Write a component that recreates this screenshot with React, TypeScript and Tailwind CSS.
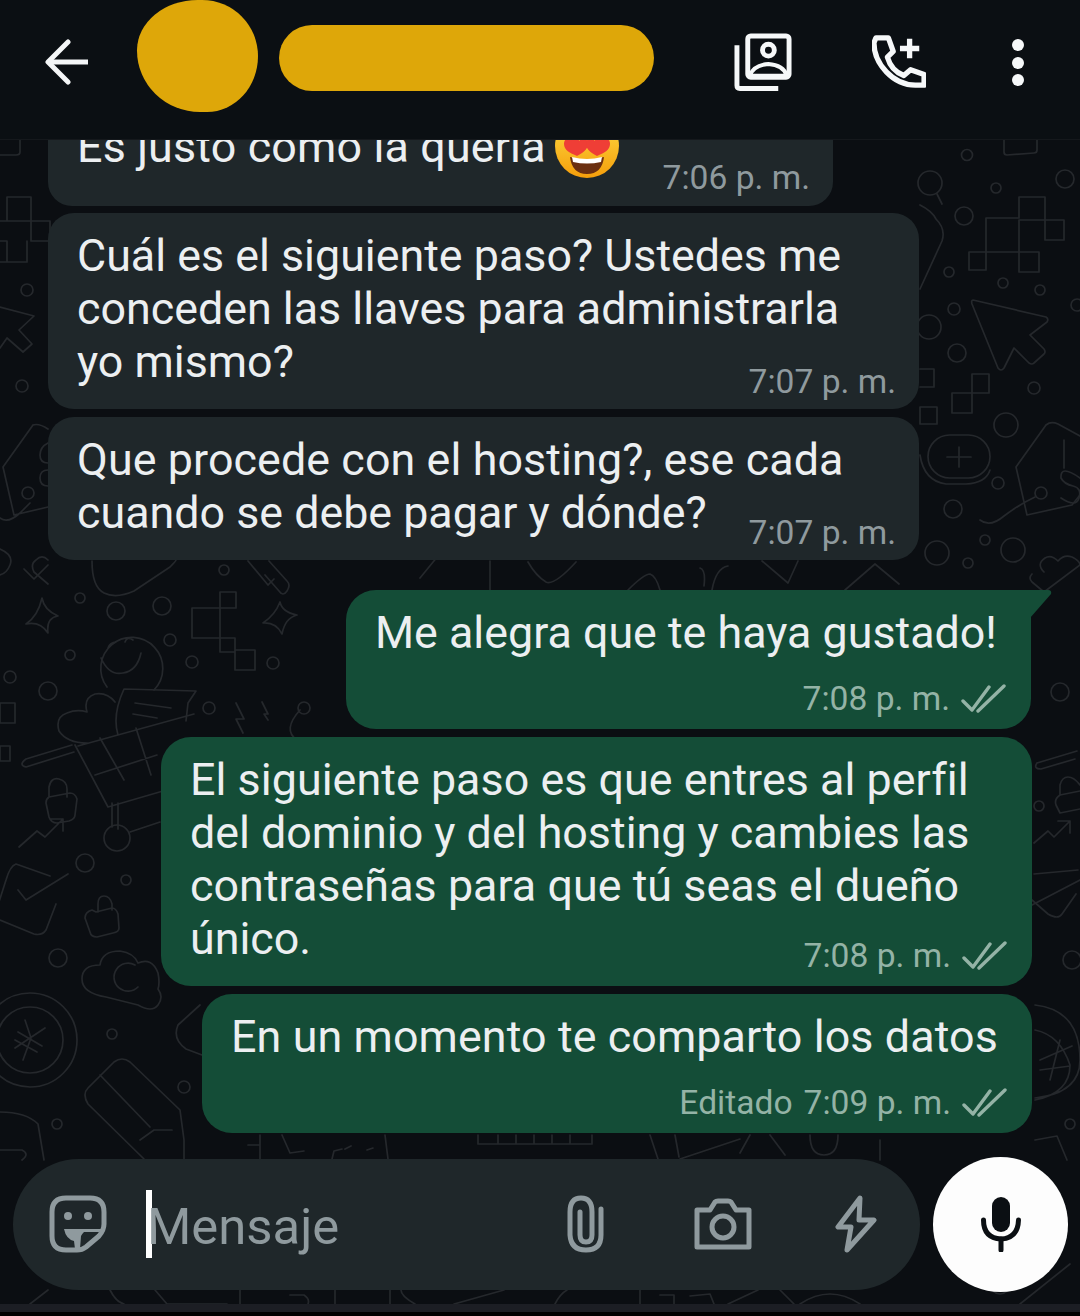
import React from "react";

const F = { fontFamily: "Roboto, 'Noto Sans', sans-serif" };

function Doodles() {
  return (
    <svg className="absolute inset-0 w-full h-full" viewBox="0 140 1080 1164" fill="none" stroke="#25282c" strokeWidth="1.7" strokeLinecap="round" strokeLinejoin="round">
      {[
        [967,155,5.5],[930,183,12],[996,188,5],[1065,179,9],[964,216,9],[949,272,5],[1003,283,5],[1040,290,5],[954,309,6],[929,327,12],[957,353,9],[1034,388,6],[1077,305,6],[1006,425,12],[998,483,6],[953,509,9],[985,540,5],[968,563,5],[1013,550,12],[937,553,12],
        [27,290,6],[22,386,6],[80,598,5],[116,611,9],[162,606,9],[170,640,6],[70,655,5],[10,677,6],[48,691,9],[192,662,6],[273,663,6],[209,708,6],[304,708,6],[224,570,5],
        [85,863,9],[126,880,5],[58,958,9],[112,1034,5],[184,1087,6],[57,1124,5],[1060,692,9],[1039,806,5],[1072,960,9],[1070,1124,5],[1000,1285,9],
      ].map((c, i) => <circle key={i} cx={c[0]} cy={c[1]} r={c[2]} />)}
      {/* top right puzzle */}
      <path d="M1004 140v12q0 3 3 3l27-2q3 0 3-3v-10M986 252v-34h33v-21h26v23h19v20h-19v-20h-26v32h20v20h-20v-20h-33M969 252h17v18h-17z" />
      <path d="M937 194l5 10M920 205q12 6 16 14 10 10 6 22l-22 48" />
      <path d="M973 300l73 17q3 2 1 5l-17 13 14 14q2 3 0 5l-10 9q-2 2-5 0l-15-15-10 20q-3 4-6 0l-26-64q-1-4 1-4z" />
      <path d="M920 369h14v18h-14M920 407h17v17h-17zM952 393h20v20h-20zM972 374h17v19h-17z" />
      <rect x="928" y="435" width="62" height="43" rx="21.5" />
      <path d="M920 455q4 26 26 29h20q20-1 24-14M947 457h24M959 447v20" />
      <path d="M1046 425l-30 42 11 48 45-10 8-10M1046 425q5-4 12-1l22 12M980 520q10 8 24-4 16-12 31-19" />
      <circle cx="1041" cy="493" r="6" />
      <path d="M1080 478q-20-14-19 0 3 6 12 8t6 12-18 0M1064 440v28" />
      <path d="M1044 572q-8-8 1-14 6-4 13 3 6-7 14-4 8 4 8 8l-36 27-12-10q-4-4 0-8" />
      {/* top left puzzle and tag */}
      <path d="M0 155h16q4 0 4-3v-12M7 197h24v24h-24zM31 221h19v20h-19zM0 221h7M0 241h7v21h20v-21M0 262h7" />
      <path d="M0 307l34 9-15 14 13 14-9 8-16-14-7 10" />
      <path d="M33 425l-30 42 11 48 34-8M33 425q6-2 15 4M0 518q8 6 20-5 6-6 10-10" />
      <circle cx="28" cy="493" r="6" />
      <path d="M48 443q-8 4-8 12t8 8M48 470q-8 0-8 8t8 8" />
      <path d="M0 549q14 6 10 16-3 8-10 10M48 560q-6-6-12 0-6 4-2 12l14 12" />
      {/* strip 560-590 */}
      <path d="M48 565l-14 14-10-10M92 561q0 26 12 32 12 6 30-2l36-24q6-6 6-7M248 561l20 24 6-6M265 575l14 16q4 6 8 0 4-6 0-10l-18-20" />
      <path d="M420 578l18-22M490 561v29M528 562q8 14 18 20 8 4 30-20M660 590q-4-14-10-16-6 0-22 16M700 568q6 2 4 18M712 590q4-22 16-24" />
      <path d="M762 561l26 22 10-22M845 590l30-26 24 20" />
      {/* star */}
      <path d="M42 598q2 12 16 18-12 2-10 17-8-12-22-9 12-8 16-26zM280 602q2 10 17 13-12 3-15 19-6-12-19-11 12-8 17-21z" />
      <path d="M220 592h16v16h-16zM192 608h28v30h-28zM220 638h15v14h-15zM235 650h20v20h-20z" />
      {/* smiley and cart */}
      <path d="M107 687a31 31 0 1 1 47 3M101 658q8 18 22 15 14-2 18-20M108 648q2-6 8-6M125 642q2-6 8-2" />
      <path d="M87 743q-20 0-28-12-4-14 8-18 10-4 20-1-4-14 8-18 12-2 20 8M118 735q-6-20 6-46l72 2-8 12-2 18M135 703l36 5M133 714l24 4M78 746l116-32M72 745l-46 14q-8 6 0 8l48-15" />
      <path d="M75 745l33 62 55-16M100 738l24 42M136 728l15 47M95 775l62-20M112 803v24M118 803v26M130 832l30-10" />
      <circle cx="117" cy="838" r="13" />
      <path d="M236 703l8 16-8 0 7 14M262 702l6 12-4 0 4 6" />
      <path d="M300 710q-18 20-3 30l40 16" />
      <path d="M49 797v-10q2-10 10-8t8 10v8M49 797l21-4q5 0 7 6l-2 16q0 4-6 6l-12 2q-6 0-8-6l-3-14q0-4 3-6zM19 847l18-16 8 6 18-18M50 819h13v12" />
      <path d="M0 703h15v20H0zM0 746h10v15H0z" />
      {/* envelope left */}
      <path d="M50 876l-34-12q-6 2-10 16L-2 905M18 890l8 10 42-26M0 920l34 14q8 2 12-4l10-26" />
      <path d="M98 912v-8q0-8 6-8t8 8v6M96 912l16-4q4 0 6 6l1 14q0 4-6 5l-16 4q-6 0-7-5l-5-14q0-6 7-8z" />
      <path d="M106 997q-24-4-24-18 0-14 18-14 2-14 20-14 14 2 18 12 14-6 20 10 2 10 0 16 6 8 0 16t-20 0zM135 965a14 14 0 1 0 3 22" />
      <circle cx="30" cy="1040" r="47" />
      <circle cx="30" cy="1040" r="33" />
      <path d="M25 1020l6 18-8 22M45 1028l-30 20M15 1040l22 12M18 1032l24 14" />
      <path d="M130 1062q-8-6-16 0l-26 26q-6 6 0 16l56 55M130 1062l50 48 4 30v20M100 1075l50 52M140 1140l14-10 18 0" />
      <path d="M0 1112q26 0 38 12l6 36M0 1150h22q8 4 0 10" />
      <path d="M196 890q-14-2-15 18-2 20 10 32M200 1005l-22 20q-6 14 8 24l16 6" />
      {/* bottom band */}
      <path d="M260 1135v24M248 1145h12M282 1135l8 18 14-2M332 1159l2-8 8-2M345 1149l6-3M367 1150l6-2M385 1135l3 24M478 1135v9h114v-9M498 1135v9M516 1135v9M534 1135v9M552 1135v9M570 1135v9" />
      <path d="M650 1135l8 24M675 1135l4 22M680 1159l60-20M750 1135l-10 18M770 1135l15 20M810 1135q0 20 14 20t14-20M880 1140v20" />
      {/* bottom strip under input */}
      <path d="M30 1304l18-14M110 1290q6 12 14 14M155 1290l12 14h60M240 1290v14M290 1295h14q6 4 4 9M335 1290v14M390 1290v14M415 1304q-14-8-14-14M454 1304l50-14M555 1304q5-10 12-14M640 1290v14M660 1295h14v9M690 1296l20-2 4 10M728 1304l30-14M780 1290l14 14M800 1304q30-20 60 0M1020 1304l50-40" />
      {/* right side */}
      <path d="M1037 763l40-12M1041 769l34-10M1037 763q-4 6 4 6M1060 795v-10q2-8 8-8t12 8M1060 795l20-4M1060 795q-6 4-4 10l4 8 20-4M1034 843l14-12 6 6 16-16M1058 821h12v12M1034 874l44-4M1032 905l48-25M1032 900l16 14q10 6 14 0l14-20M1035 1005q45 5 45 55M1035 1098q45-5 45-38M1035 1030q25 5 35 35 0 28-35 35M1060 1040l-10 40M1040 1060l32-14M1040 1070l30-4M1035 1140l22-4 10 24" />
    </svg>
  );
}

function Check({ className }: { className: string }) {
  return (
    <svg className={className} viewBox="0 0 46 30" fill="none" stroke="#94b3a6" strokeWidth="3.4" strokeLinecap="round" strokeLinejoin="round">
      <path d="M2 17l9 9L28 3M17 27L43 2" />
    </svg>
  );
}

function Emoji() {
  return (
    <svg className="inline-block w-[66px] h-[66px] align-[-17px] ml-[8px]" viewBox="0 0 66 66">
      <defs>
        <linearGradient id="eg" x1="0" y1="0" x2="0" y2="1">
          <stop offset="0" stopColor="#fde047" />
          <stop offset="1" stopColor="#f59e0b" />
        </linearGradient>
      </defs>
      <circle cx="33" cy="33" r="32" fill="url(#eg)" />
      <path d="M16 44q17 5 34 0-2 17-17 17T16 44z" fill="#6b2f10" />
      <path d="M18 44q15 4 30 0l-1 5q-14 3-28 0z" fill="#fff" />
      <path d="M17 26c4-4 8-2 8 2 3-4 9-3 9 3 0 5-5 9-11 12-7-3-13-6-13-12 0-5 4-7 7-5z" fill="#ef3e36" />
      <path d="M49 26c-4-4-8-2-8 2-3-4-9-3-9 3 0 5 5 9 11 12 7-3 13-6 13-12 0-5-4-7-7-5z" fill="#ef3e36" />
    </svg>
  );
}

function Meta({ time, out, edited, className }: { time: string; out?: boolean; edited?: boolean; className: string }) {
  return (
    <div className={`absolute flex items-center text-[33.6px] leading-[40px] whitespace-nowrap ${out ? "text-[#94b3a6]" : "text-[#8f9a9e]"} ${className}`}>
      {edited && <span className="mr-[11px]">Editado</span>}
      <span>{time}</span>
      {out && <Check className="w-[46px] h-[30px] ml-[11px]" />}
    </div>
  );
}

function Lines({ lines }: { lines: { t: string; c?: string }[] }) {
  return (
    <div className="text-[44.8px] leading-[53px] text-[#eceff1] whitespace-nowrap">
      {lines.map((l) => <div key={l.t} className={l.c}>{l.t}</div>)}
    </div>
  );
}

export default function App() {
  return (
    <div className="w-[1080px] h-[1316px] flex flex-col overflow-hidden bg-black" style={F}>
      <header className="h-[140px] shrink-0 bg-[#0b0f13] border-b border-[#15181c] flex items-start z-10">
        <svg className="ml-[44px] mt-[39px] w-[46px] h-[46px] shrink-0" viewBox="0 0 46 46" fill="none" stroke="#f4f6f7" strokeWidth="5">
          <path d="M24 3L4 23l20 20" strokeLinecap="round" strokeLinejoin="round" />
          <path d="M4 23h40" />
        </svg>
        <div className="ml-[47px] w-[121px] h-[112px] shrink-0 bg-[#dea709] rounded-[50%_46%_42%_52%/45%_50%_50%_55%]" />
        <div className="ml-[21px] mt-[25px] w-[375px] h-[66px] shrink-0 rounded-full bg-[#dea709]" />
        <svg className="ml-[80px] mt-[32px] w-[59px] h-[60px] shrink-0" viewBox="0 0 60 60" fill="none" stroke="#f6f8f9" strokeWidth="5" strokeLinejoin="round" strokeLinecap="round">
          <rect x="14" y="3.500" width="42" height="42" rx="3" />
          <circle cx="35" cy="18" r="6" />
          <path d="M16 44q4-11 19-12 15 1 19 12z" strokeWidth="4" />
          <path d="M3 13v41q0 3 3 3h39" strokeLinecap="butt" />
        </svg>
        <svg className="ml-[79px] mt-[35px] w-[54px] h-[54px] shrink-0" viewBox="0 0 56 56" fill="none" stroke="#f6f8f9" strokeWidth="5.500" strokeLinejoin="round" strokeLinecap="round">
          <path d="M4 3h13l5 14-6 6q4 14 17 19l7-6 14 5v11H45C22 52 2 30 2 8z" />
          <path d="M39 4v20M29 14h20" strokeLinecap="butt" strokeWidth="5.500" />
        </svg>
        <div className="ml-[86px] mt-[39px] flex flex-col gap-[5.5px] shrink-0">
          <div className="w-[12px] h-[12px] rounded-full bg-[#f6f8f9]" />
          <div className="w-[12px] h-[12px] rounded-full bg-[#f6f8f9]" />
          <div className="w-[12px] h-[12px] rounded-full bg-[#f6f8f9]" />
        </div>
      </header>

      <main className="relative flex-1 min-h-0 flex flex-col bg-[#0b0e12] overflow-hidden">
        <Doodles />
        <div className="relative flex-1 min-h-0 flex flex-col">
          {/* incoming */}
          <div className="relative ml-[48px] mt-[-43px] w-[785px] h-[109px] rounded-[24px] bg-[#1f272a] pl-[29px] pt-[16px]">
            <div className="text-[44.8px] leading-[53px] text-[#eceff1] whitespace-nowrap h-[53px] tracking-[0.17px]">Es justo como la quería<Emoji /></div>
            <Meta time="7:06 p. m." className="right-[23px] bottom-[8px]" />
          </div>
          <div className="relative ml-[48px] mt-[7px] w-[871px] h-[196px] rounded-[26px] bg-[#1f272a] pl-[29px] pt-[16px]">
            <Lines lines={[{ t: "Cuál es el siguiente paso? Ustedes me" }, { t: "conceden las llaves para administrarla" }, { t: "yo mismo?" }]} />
            <Meta time="7:07 p. m." className="right-[23px] bottom-[7px]" />
          </div>
          <div className="relative ml-[48px] mt-[8px] w-[871px] h-[143px] rounded-[26px] bg-[#1f272a] pl-[29px] pt-[16px]">
            <Lines lines={[{ t: "Que procede con el hosting?, ese cada", c: "tracking-[0.1px]" }, { t: "cuando se debe pagar y dónde?" }]} />
            <Meta time="7:07 p. m." className="right-[23px] bottom-[7px]" />
          </div>
          {/* outgoing */}
          <div className="relative ml-[346px] mt-[30px] w-[685px] h-[139px] rounded-[30px] rounded-tr-none bg-[#144d37] pl-[29px] pt-[16px]">
            <svg className="absolute top-0 right-[-21px] w-[22px] h-[28px]" viewBox="0 0 22 28">
              <path d="M0 0h18q4 0 3 4L0 28z" fill="#144d37" />
            </svg>
            <Lines lines={[{ t: "Me alegra que te haya gustado!" }]} />
            <Meta out time="7:08 p. m." className="right-[24px] bottom-[10px]" />
          </div>
          <div className="relative ml-[161px] mt-[8px] w-[871px] h-[249px] rounded-[30px] bg-[#144d37] pl-[29px] pt-[16px]">
            <Lines lines={[{ t: "El siguiente paso es que entres al perfil", c: "tracking-[0.05px]" }, { t: "del dominio y del hosting y cambies las" }, { t: "contraseñas para que tú seas el dueño", c: "tracking-[0.05px]" }, { t: "único." }]} />
            <Meta out time="7:08 p. m." className="right-[24px] bottom-[10px]" />
          </div>
          <div className="relative ml-[202px] mt-[8px] w-[830px] h-[139px] rounded-[30px] bg-[#144d37] pl-[29px] pt-[16px]">
            <Lines lines={[{ t: "En un momento te comparto los datos", c: "tracking-[0.11px]" }]} />
            <Meta out edited time="7:09 p. m." className="right-[24px] bottom-[10px]" />
          </div>
        </div>

        {/* input row */}
        <div className="relative flex items-center pl-[13px] pb-[13px] h-[147px] shrink-0">
          <div className="w-[907px] h-[131px] rounded-[66px] bg-[#1f272a] flex items-center relative">
            <svg className="ml-[36px] w-[58px] h-[58px] shrink-0" viewBox="0 0 58 58" fill="none" stroke="#8f9a9e" strokeWidth="5" strokeLinejoin="round">
              <path d="M17 3h24q14 0 14 14v12Q55 35 50 41L37 52Q33 55 28 55H17Q3 55 3 41V17Q3 3 17 3z" />
              <circle cx="19" cy="21" r="4" fill="#8f9a9e" stroke="none" />
              <circle cx="39" cy="21" r="4" fill="#8f9a9e" stroke="none" />
              <path d="M15 34h38l-3 3H35q-2 2-3 4l-1 13h-5l-1-8q-8-2-10-12z" fill="#8f9a9e" stroke="none" />
            </svg>
            <div className="ml-[39px] w-[6px] h-[68px] bg-white shrink-0" />
            <div className="ml-[-5px] mt-[5px] text-[50.8px] leading-[68px] text-[#8f9a9e] w-[400px] shrink-0">Mensaje</div>
            <svg className="ml-[20px] w-[40px] h-[58px] shrink-0" viewBox="0 0 40 58" fill="none" stroke="#8f9a9e" strokeWidth="5" strokeLinecap="round">
              <path d="M34 14v26q0 15-15 15T3 40V17Q3 3 14 3t11 14v23q0 7-6 7t-6-7V17" />
            </svg>
            <svg className="ml-[87px] w-[58px] h-[52px] shrink-0" viewBox="0 0 58 52" fill="none" stroke="#8f9a9e" strokeWidth="5" strokeLinejoin="round">
              <path d="M3 12h13l5-8q1-1 3-1h10q2 0 3 1l5 8h13v37H3z" />
              <circle cx="29" cy="29" r="11" />
            </svg>
            <svg className="ml-[83px] w-[42px] h-[58px] shrink-0" viewBox="0 0 42 58" fill="none" stroke="#8f9a9e" strokeWidth="5" strokeLinejoin="round" strokeLinecap="round">
              <path d="M25 3L3 32h13l-4 23 27-30H24z" />
            </svg>
          </div>
          <div className="ml-[13px] w-[135px] h-[135px] rounded-full bg-[#fdfdfd] flex items-center justify-center shrink-0">
            <svg className="w-[40px] h-[56px]" viewBox="0 0 40 56" fill="none" stroke="#0b0f13" strokeLinecap="round">
              <rect x="11" y="1" width="18" height="35" rx="9" fill="#0b0f13" stroke="none" />
              <path d="M2.500 24q0 18 17.500 19 17-1 17.500-19" strokeWidth="5" />
              <path d="M20 43v11" strokeWidth="5" />
            </svg>
          </div>
        </div>
      </main>
      <div className="h-[8px] shrink-0 bg-[#1c1e24]" />
      <div className="h-[4px] shrink-0 bg-black" />
    </div>
  );
}
